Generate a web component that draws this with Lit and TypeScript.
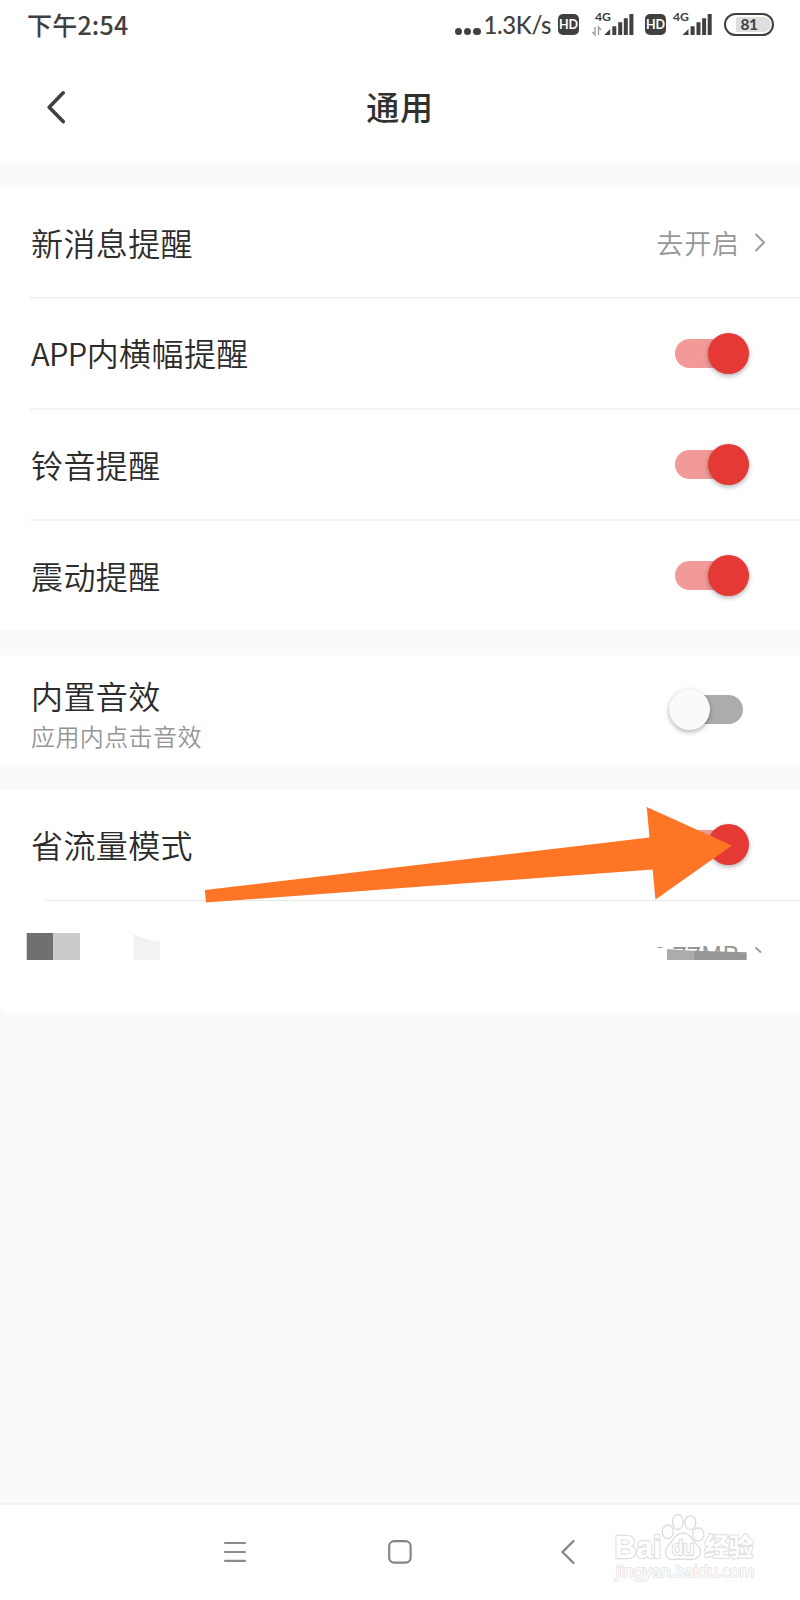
import { LitElement, html, css, svg, nothing } from "lit";
import { customElement, property } from "lit/decorators.js";

@customElement("toggle-switch")
class ToggleSwitch extends LitElement {
  @property({ type: Boolean, reflect: true }) on = false;

  static styles = css`
    :host {
      display: flex;
      align-items: center;
      width: 80px;
      height: 41px;
      margin-right: 51px;
      position: relative;
    }
    .track {
      flex: 1;
      height: 29px;
      margin: 0 6px;
      border-radius: 15px;
      background: #acacac;
    }
    .thumb {
      position: absolute;
      left: 0;
      top: 0;
      width: 41px;
      height: 41px;
      border-radius: 50%;
      background: #fafafa;
      box-shadow: 0 2px 5px rgba(0, 0, 0, 0.3), 0 0 2px rgba(0, 0, 0, 0.06);
    }
    :host([on]) .track {
      background: #f19a98;
    }
    :host([on]) .thumb {
      left: 39px;
      background: #e43935;
    }
  `;

  render() {
    return html`<div class="track"></div><div class="thumb"></div>`;
  }
}

@customElement("settings-row")
class SettingsRow extends LitElement {
  @property() prefix = "";
  @property() label = "";
  @property() note = "";

  static styles = css`
    :host {
      display: flex;
      align-items: center;
      justify-content: space-between;
      box-sizing: border-box;
      height: 111px;
      padding-left: 31px;
    }
    :host(.short) {
      height: 110px;
      padding-bottom: 1px;
    }
    .texts {
      display: flex;
      flex-direction: column;
    }
    .label {
      font-size: 32px;
      font-weight: 350;
      line-height: 44px;
      letter-spacing: 0.4px;
      color: #2c2c2c;
      padding-bottom: 2px;
    }
    .latin {
      font-size: 31px;
      letter-spacing: -0.6px;
    }
    .note {
      font-size: 24px;
      font-weight: 350;
      line-height: 34px;
      letter-spacing: 0.4px;
      color: #969696;
    }
    .double {
      padding-top: 7px;
    }
  `;

  render() {
    return html`
      <div class=${this.note ? "texts double" : "texts"}>
        <span class="label">${this.prefix ? html`<span class="latin">${this.prefix}</span>` : nothing}${this.label}</span>
        ${this.note ? html`<span class="note">${this.note}</span>` : nothing}
      </div>
      <slot></slot>
    `;
  }
}

const signal = svg`
  <path d="M0 21 L6 15 V21Z M8.1 12.3h4V21H8.1Z M14 8.3H18V21H14Z M19.6 4.3h4V21h-4Z M25.2 0H29.2V21H25.2Z" fill="#404040"/>`;

@customElement("app-root")
class AppRoot extends LitElement {
  static styles = css`
    :host {
      display: flex;
      flex-direction: column;
      position: relative;
      width: 800px;
      height: 1600px;
      overflow: hidden;
      background: #fafafa;
      font-family: "Noto Sans CJK SC", sans-serif;
      color: #303030;
    }
    svg {
      display: block;
      flex: none;
    }
    .status {
      display: flex;
      align-items: center;
      height: 50px;
      padding: 0 26px 0 27px;
      background: #fff;
      color: #404040;
    }
    .time {
      flex: 1;
      font-size: 25px;
      font-weight: 500;
      letter-spacing: 0.2px;
      padding-bottom: 3px;
    }
    .dots {
      display: flex;
      gap: 2px;
      margin: 13px 3px 0 0;
    }
    .dots i {
      width: 7.3px;
      height: 7.3px;
      border-radius: 50%;
      background: #404040;
    }
    .speed {
      font: 500 24px/50px "Lato", sans-serif;
      letter-spacing: -0.4px;
      width: 69px;
      white-space: nowrap;
      margin-right: 5.5px;
    }
    .hd {
      flex: none;
      width: 21px;
      height: 21px;
      border-radius: 5px;
      background: #404040;
      color: #fff;
      font: 700 12.5px/21px "Lato", sans-serif;
      text-align: center;
      margin-bottom: 1px;
    }
    .first-net {
      margin: 0 11px 0 13px;
    }
    .second-net {
      margin-left: 6px;
    }
    .first-net,
    .second-net {
      overflow: visible;
    }
    .net {
      font: 700 11px "Lato", sans-serif;
    }
    .battery {
      display: flex;
      flex: none;
      align-items: center;
      justify-content: flex-end;
      box-sizing: border-box;
      width: 50px;
      height: 23px;
      margin: 0 0 1px 12px;
      padding-right: 1px;
      border: 2px solid #404040;
      border-radius: 12px;
    }
    .charge {
      width: 35px;
      height: 15px;
      border-radius: 2px 8px 8px 2px;
      background: #dedede;
      font: 700 15.5px/15px "Lato", sans-serif;
      letter-spacing: -0.6px;
      text-indent: 4.5px;
    }
    .header {
      display: grid;
      grid-template-columns: 1fr auto 1fr;
      align-items: center;
      height: 113px;
      background: #fff;
    }
    .back {
      margin-left: 45px;
    }
    .title {
      font-size: 33px;
      font-weight: 500;
      letter-spacing: 0.8px;
      line-height: 48px;
      padding-bottom: 2px;
    }
    .group {
      background: #fff;
      margin-top: 24px;
      height: 443px;
    }
    .line {
      height: 2px;
      margin: -1px 0 -1px 30px;
      background: #f3f3f3;
      position: relative;
    }
    .sound {
      margin-top: 25px;
      height: 110px;
    }
    .data {
      margin-top: 25px;
      height: 223px;
      border-bottom-left-radius: 8px;
    }
    .data .line {
      margin: 0 0 -1px 46px;
      height: 1px;
      background: #e8e8e8;
    }
    .more {
      display: flex;
      align-items: center;
      gap: 14px;
      margin-right: 34px;
      padding-bottom: 1px;
      font-size: 27px;
      font-weight: 350;
      letter-spacing: 0.9px;
      color: #969696;
    }
    .cache {
      display: flex;
      justify-content: space-between;
      height: 60px;
      padding: 0 37px 0 26px;
    }
    .nav {
      display: flex;
      align-items: center;
      box-sizing: border-box;
      height: 97px;
      margin-top: auto;
      padding: 0 0 2px 223px;
      background: #fff;
      border-top: 2px solid #f3f3f3;
    }
    .home {
      margin: 0 146px 0 140px;
    }
    .arrow {
      position: absolute;
      left: 200px;
      top: 800px;
    }
    .mark {
      position: absolute;
      left: 605px;
      top: 1506px;
    }
    .mark text {
      fill: #fff;
      stroke: #e0e0e0;
      paint-order: stroke;
      stroke-linejoin: round;
    }
  `;

  render() {
    return html`
      <div class="status">
        <span class="time">下午2:54</span>
        <span class="dots"><i></i><i></i><i></i></span>
        <span class="speed">1.3K/s</span>
        <span class="hd">HD</span>
        <svg class="first-net" width="42" height="24" viewBox="0 0 42 24">
          <text class="net" x="3" y="8" textLength="16" lengthAdjust="spacingAndGlyphs" fill="#404040">4G</text>
          <path d="M3 14v8l-2.5-3M6.5 22v-8l2.5 3" fill="none" stroke="#999" stroke-width="1.3"/>
          <g transform="translate(12.2 1)">${signal}</g>
        </svg>
        <span class="hd">HD</span>
        <svg class="second-net" width="40" height="24" viewBox="0 0 40 24">
          <text class="net" x="1" y="8" textLength="16" lengthAdjust="spacingAndGlyphs" fill="#404040">4G</text>
          <g transform="translate(10.5 1)">${signal}</g>
        </svg>
        <div class="battery"><div class="charge">81</div></div>
      </div>

      <div class="header">
        <svg class="back" width="22" height="34" viewBox="0 0 22 34">
          <path d="M18.2 2.8 L4.2 17.2 L18.2 31.6" fill="none" stroke="#404040" stroke-width="3.6" stroke-linecap="round" stroke-linejoin="round"/>
        </svg>
        <span class="title">通用</span>
      </div>

      <div class="group">
        <settings-row label="新消息提醒">
          <div class="more">
            去开启
            <svg width="12" height="20" viewBox="0 0 12 20">
              <path d="M1.5 2 L10 10.5 L1.5 19" fill="none" stroke="#9b9b9b" stroke-width="2"/>
            </svg>
          </div>
        </settings-row>
        <div class="line"></div>
        <settings-row prefix="APP" label="内横幅提醒"><toggle-switch on></toggle-switch></settings-row>
        <div class="line"></div>
        <settings-row label="铃音提醒"><toggle-switch on></toggle-switch></settings-row>
        <div class="line"></div>
        <settings-row label="震动提醒"><toggle-switch on></toggle-switch></settings-row>
      </div>

      <div class="group sound">
        <settings-row class="short" label="内置音效" note="应用内点击音效"><toggle-switch></toggle-switch></settings-row>
      </div>

      <div class="group data">
        <settings-row class="short" label="省流量模式"><toggle-switch on></toggle-switch></settings-row>
        <div class="line"></div>
        <div class="cache">
          <svg width="136" height="60" viewBox="26 900 136 60">
            <rect x="26.7" y="933" width="26.6" height="27" fill="#707070"/>
            <rect x="53.3" y="933" width="26.7" height="27" fill="#cbcbcb"/>
            <path d="M133.3 934 Q146 940 160 941.5 V960 H133.3Z" fill="#f2f2f2"/>
          </svg>
          <svg width="113" height="60" viewBox="650 900 113 60">
            <defs><clipPath id="top"><path d="M650 940H763V953H672L666 948H650Z"/></clipPath></defs>
            <g clip-path="url(#top)">
              <text x="651.5" y="965.5" font-size="27" font-weight="350" textLength="88" fill="#969696">6.77MB</text>
              <path d="M755.5 947.5 L761 952.5" fill="none" stroke="#9b9b9b" stroke-width="2"/>
            </g>
            <path d="M667 949 Q680 950 693.3 950.8 V960 H667Z" fill="#acacac"/>
            <path d="M693.3 950.8 L746.7 952.3 V960 H693.3Z" fill="#979797"/>
          </svg>
        </div>
      </div>

      <div class="nav">
        <svg width="24" height="24" viewBox="0 0 24 24">
          <path d="M2 3H22M2 12H22M2 20.8H22" stroke="#8c8c8c" stroke-width="2.2" stroke-linecap="round"/>
        </svg>
        <svg class="home" width="26" height="26" viewBox="0 0 26 26">
          <rect x="2.2" y="2.2" width="21.4" height="21.4" rx="5" fill="none" stroke="#858585" stroke-width="2.2"/>
        </svg>
        <svg width="18" height="26" viewBox="0 0 18 26">
          <path d="M14.5 2 L3.5 13 L14.5 24" fill="none" stroke="#858585" stroke-width="2.3" stroke-linecap="round"/>
        </svg>
      </div>

      <svg class="arrow" width="540" height="110" viewBox="200 800 540 110">
        <path d="M204.8 890 L649.5 837.5 L646.7 807 L732 845.5 L655.5 899.5 L652.6 869.5 L206 902.5Z" fill="#ff7526"/>
      </svg>

      <svg class="mark" width="160" height="84" viewBox="605 1506 160 84">
        <text x="614.5" y="1558" font-family="Liberation Sans, sans-serif" font-weight="700" font-size="32" textLength="47" lengthAdjust="spacingAndGlyphs" stroke-width="2.4">Bai</text>
        <g fill="#fff" stroke="#dcdcdc" stroke-width="1.3">
          <ellipse cx="667.8" cy="1531.8" rx="5.5" ry="6.8"/>
          <ellipse cx="677.8" cy="1522" rx="5.2" ry="7.5"/>
          <ellipse cx="690.3" cy="1522.7" rx="5.5" ry="7"/>
          <ellipse cx="698.3" cy="1534.5" rx="5.7" ry="6.5"/>
          <path d="M683 1533 C691 1533 693 1542 698 1546 C703 1552 700 1559 692 1559.5 C686 1560 680 1558 674 1559.5 C666 1560 663 1552 668 1546 C673 1541 675 1533 683 1533Z"/>
        </g>
        <text x="672" y="1554.5" font-family="Liberation Sans, sans-serif" font-size="20" textLength="22" lengthAdjust="spacingAndGlyphs" stroke-width="2.4">du</text>
        <text x="704.5" y="1556" font-family="Noto Sans CJK SC, sans-serif" font-weight="700" font-size="25" textLength="49" stroke-width="2.2">经验</text>
        <text x="615.5" y="1577" font-family="Noto Sans, sans-serif" font-size="16" textLength="139" lengthAdjust="spacingAndGlyphs" stroke-width="1.5">jingyan.baidu.com</text>
      </svg>
    `;
  }
}
